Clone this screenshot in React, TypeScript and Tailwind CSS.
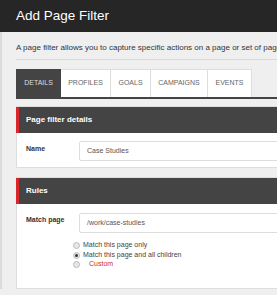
export default function App() {
  const tabs = [
    { label: "DETAILS", w: "w-[45px]", active: true },
    { label: "PROFILES", w: "w-[50px]" },
    { label: "GOALS", w: "w-[40px]" },
    { label: "CAMPAIGNS", w: "w-[57px]" },
    { label: "EVENTS", w: "w-[44px]" },
  ];
  const radios = [
    { label: "Match this page only" },
    { label: "Match this page and all children", checked: true },
    { label: "Custom", custom: true },
  ];

  return (
    <div className="w-[277px] h-[295px] overflow-hidden bg-[#efefef] font-['Liberation_Sans',Arial,sans-serif]">
      <header className="h-[32px] bg-[#262626] pl-4 flex items-center text-[13.5px] text-white">
        Add Page Filter
      </header>
      <div className="w-[340px] border-l-2 border-[#dcdcdc] pl-[14px]">
        <p className="pt-[10px] h-[28px] text-[8px] text-[#333] whitespace-nowrap border-b border-[#dadada]">
          A page filter allows you to capture specific actions on a page or set of pages
        </p>

        <div className="mt-[9px] flex h-[30px] border-b-2 border-[#444]">
          {tabs.map((t) => (
            <div
              key={t.label}
              className={`${t.w} flex items-center justify-center text-[7px] border border-b-0 ${
                t.active
                  ? "bg-[#444] border-[#444] text-[#ddd]"
                  : "bg-white border-[#ddd] text-[#666] border-l-0"
              }`}
            >
              {t.label}
            </div>
          ))}
        </div>

        <section className="mt-[7px] border border-[#ddd] border-l-0 bg-white">
          <h2 className="h-[26px] bg-[#444] border-l-[3px] border-[#d9262b] pl-[7px] flex items-center text-[8px] font-bold text-white">
            Page filter details
          </h2>
          <div className="flex pt-[8px] pb-[6px] pl-[9px] border-l border-[#ddd]">
            <span className="w-[53px] pt-[3px] text-[7px] font-bold text-[#333]">Name</span>
            <div className="h-[20px] flex-1 border border-[#ddd] rounded-[2px] flex items-center pl-[7px] text-[7px] text-[#555]">
              Case Studies
            </div>
          </div>
        </section>

        <section className="mt-[9px] border border-[#ddd] border-l-0 bg-white">
          <h2 className="h-[26px] bg-[#444] border-l-[3px] border-[#d9262b] pl-[7px] flex items-center text-[8px] font-bold text-white">
            Rules
          </h2>
          <div className="pt-[9px] pb-[19px] pl-[9px] border-l border-[#ddd]">
            <div className="flex">
              <span className="w-[53px] pt-[2px] text-[7px] font-bold text-[#333]">Match page</span>
              <div className="h-[20px] flex-1 border border-[#ddd] rounded-[2px] flex items-center pl-[7px] text-[7px] text-[#555]">
                /work/case-studies
              </div>
            </div>
            <div className="mt-[8px] pl-[47px] flex flex-col gap-[0.5px]">
              {radios.map((r) => (
                <label key={r.label} className="flex items-center h-[9px] text-[7px] text-[#444]">
                  <span className="w-[7px] h-[7px] rounded-full border border-[#bbb] bg-[#e6e6e6] flex items-center justify-center mr-[3px]">
                    {r.checked && <span className="w-[3px] h-[3px] rounded-full bg-[#333]" />}
                  </span>
                  <span className={r.custom ? "ml-[6px] text-[#d9262b]" : ""}>{r.label}</span>
                </label>
              ))}
            </div>
          </div>
        </section>
      </div>
    </div>
  );
}
